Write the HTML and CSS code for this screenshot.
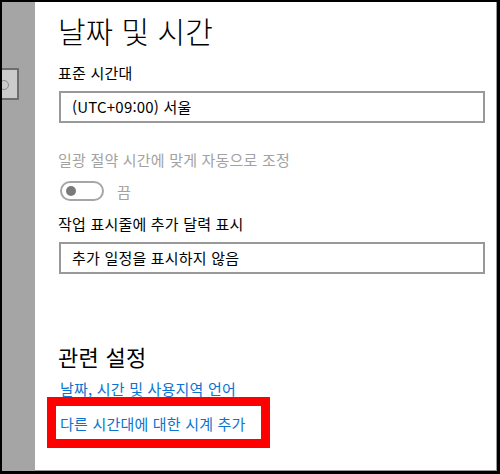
FILE: index.html
```html
<!DOCTYPE html>
<html lang="ko">
<head>
<meta charset="utf-8">
<link rel="stylesheet" href="styles.css">
</head>
<body>
<div class="frame">
  <div class="sidebar">
    <div class="side-box"><span class="side-circle"></span></div>
  </div>
  <div class="main">
    <h1 class="title">날짜 및 시간</h1>
    <div class="label label-first">표준 시간대</div>
    <div class="select">(UTC+09:00) 서울</div>
    <div class="label disabled">일광 절약 시간에 맞게 자동으로 조정</div>
    <div class="toggle-row">
      <span class="toggle"><span class="knob"></span></span>
      <span class="toggle-text">끔</span>
    </div>
    <div class="label label-gap">작업 표시줄에 추가 달력 표시</div>
    <div class="select">추가 일정을 표시하지 않음</div>
    <h2 class="heading">관련 설정</h2>
    <div class="link">날짜, 시간 및 사용지역 언어</div>
    <div class="link highlighted">다른 시간대에 대한 시계 추가</div>
  </div>
</div>
</body>
</html>
```
FILE: styles.css
```css
html, body {
  margin: 0;
  padding: 0;
  background: #ffffff;
}
body {
  font-family: "Noto Sans CJK KR", "Noto Sans", sans-serif;
  color: #000;
}
.frame {
  width: 500px;
  height: 474px;
  box-sizing: border-box;
  border-top: 2px solid #000;
  border-left: 2px solid #000;
  border-right: 3px solid #000;
  border-bottom: 3px solid #000;
  display: flex;
  overflow: hidden;
}
.sidebar {
  width: 33px;
  flex: none;
  background: #a5a5a5;
  padding-top: 66px;
  box-sizing: border-box;
}
.side-box {
  width: 17px;
  height: 32px;
  box-sizing: border-box;
  border: 2px solid #6e6e6e;
  border-left: none;
  background: #cbcbcb;
  position: relative;
  overflow: hidden;
}
.side-circle {
  position: absolute;
  left: -3px;
  top: 10px;
  width: 8px;
  height: 8px;
  border: 1px solid #8a8a8a;
  border-radius: 50%;
}
.main {
  flex: 1;
  background: #fff;
  padding: 8px 11px 0 23px;
  border-right: 1px solid #9a9a9a;
  border-bottom: 1px solid #9a9a9a;
}
.title {
  margin: 0;
  font-size: 30px;
  font-weight: 300;
  line-height: 40px;
}
.label {
  font-size: 15px;
  line-height: 20px;
  margin-top: 9px;
  letter-spacing: 0.2px;
}
.label.label-first {
  margin-top: 13px;
}
.label.disabled {
  color: #a2a2a2;
  margin-top: 27px;
}
.label.label-gap {
  margin-top: 13px;
}
.select {
  margin-top: 8px;
  height: 32px;
  box-sizing: border-box;
  border: 2px solid #999;
  padding-left: 11px;
  font-size: 15px;
  line-height: 28px;
  margin-left: 1px;
  letter-spacing: 0.2px;
}
.toggle-row {
  display: flex;
  align-items: center;
  margin-top: 11px;
  margin-left: 2px;
  height: 20px;
}
.toggle {
  width: 44px;
  height: 20px;
  box-sizing: border-box;
  border: 2px solid #a6a6a6;
  border-radius: 10px;
  display: flex;
  align-items: center;
  padding-left: 4px;
}
.knob {
  width: 10px;
  height: 10px;
  border-radius: 50%;
  background: #7a7a7a;
}
.toggle-text {
  margin-left: 13px;
  font-size: 15px;
  color: #a2a2a2;
}
.heading {
  margin: 68px 0 0 0;
  font-size: 22px;
  font-weight: 400;
  line-height: 28px;
  letter-spacing: 0.3px;
}
.link {
  font-size: 15px;
  line-height: 20px;
  color: #0a74d0;
  margin-top: 9px;
  margin-left: 2px;
  letter-spacing: 0.2px;
}
.highlighted {
  position: relative;
  display: inline-block;
  margin-top: 15px;
}
.highlighted::after {
  content: "";
  position: absolute;
  left: -13px;
  right: -24px;
  top: -17px;
  bottom: -14px;
  border: 9px solid #ff0000;
}
```
